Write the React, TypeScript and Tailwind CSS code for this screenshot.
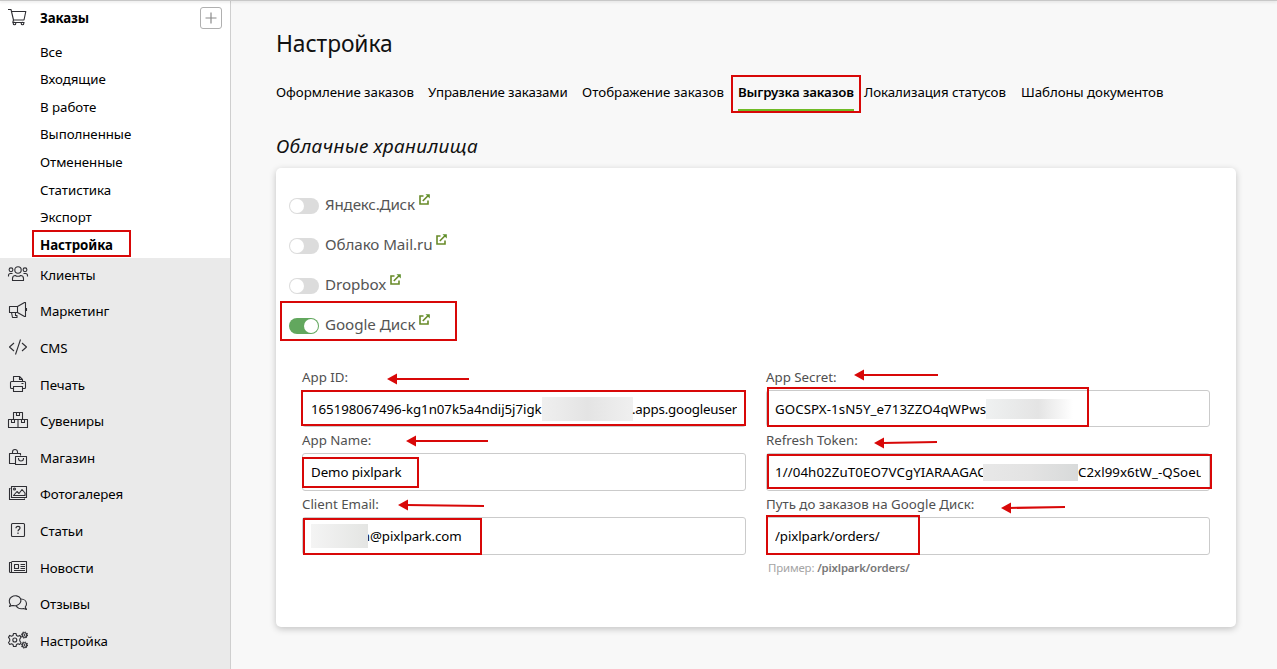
import type { ReactNode } from "react";

function Icon({ children }: { children: ReactNode }) {
  return (
    <svg
      viewBox="0 0 22 22"
      className="h-[22px] w-[22px] shrink-0"
      fill="none"
      stroke="#2e2e33"
      strokeWidth="1.1"
      strokeLinejoin="round"
    >
      {children}
    </svg>
  );
}

const cartIcon = (
  <Icon>
    <path d="M1 2.500h3l2.500 10.500h10.500L18.800 4.500H4.500M6.500 13l-.7 2.500H17.500" />
    <circle cx="7.500" cy="16.500" r="1.300" />
    <circle cx="15.500" cy="16.500" r="1.300" />
  </Icon>
);

const menu: { label: string; icon: ReactNode }[] = [
  {
    label: "Клиенты",
    icon: (
      <Icon>
        <circle cx="11" cy="6" r="3.200" />
        <path d="M5.500 16.500v-2c0-2 1.200-3 3-3l1 .7h3l1-.7c1.800 0 3 1 3 3v2z" />
        <circle cx="4" cy="5.800" r="1.900" />
        <circle cx="18" cy="5.800" r="1.900" />
        <path d="M1.500 12.500v-1c0-1.200.7-2 2-2h2M20.500 12.500v-1c0-1.200-.7-2-2-2h-2" />
      </Icon>
    ),
  },
  {
    label: "Маркетинг",
    icon: (
      <Icon>
        <path d="M2.500 6.500h8l7-4h1v14h-1l-7-4h-8zM10.500 6.500v6M4.500 12.500l1 5h4.500v-2H8.500v-3M19.500 8v3" />
      </Icon>
    ),
  },
  {
    label: "CMS",
    icon: (
      <Icon>
        <path d="M7 6L2.500 10L7 14M15 6l4.500 4L15 14M13.500 2.500L8.500 17.500" />
      </Icon>
    ),
  },
  {
    label: "Печать",
    icon: (
      <Icon>
        <path d="M6.500 7.500v-5h6l3 3v2M12.500 2.500v3h3M6.500 14.500h-2a1 1 0 0 1-1-1v-5a1 1 0 0 1 1-1h13a1 1 0 0 1 1 1v5a1 1 0 0 1-1 1h-2M6.500 12.500h9v5h-9zM14.500 9.500h2" />
      </Icon>
    ),
  },
  {
    label: "Сувениры",
    icon: (
      <Icon>
        <path d="M6.500 2.500h9v7h-9zM1.500 9.500H11v8H1.500zM11 9.500h9.500v8H11zM9.500 2.500v3h3v-3M4.500 9.500v3h3v-3M14.500 9.500v3h3v-3" />
      </Icon>
    ),
  },
  {
    label: "Магазин",
    icon: (
      <Icon>
        <path d="M8 16.500H2.500v-10h11v2M5.500 6.500V5a2.500 2.500 0 0 1 5 0v1.500M8.500 9.500h11v8h-11zM11.500 11v.5a2.500 2.500 0 0 0 5 0V11" />
      </Icon>
    ),
  },
  {
    label: "Фотогалерея",
    icon: (
      <Icon>
        <path d="M4.500 3.500h15v11h-15zM3.500 5.500h-1v11h15v-1M6.500 12.500l3.500-4 2 2 3-4 3 3.500v2.500z" />
        <circle cx="7.500" cy="6" r="1" />
      </Icon>
    ),
  },
  {
    label: "Статьи",
    icon: (
      <Icon>
        <rect x="4.500" y="3.500" width="13" height="13" rx="1" />
        <path d="M9 8.300c0-1.200.8-1.900 2-1.900s2 .7 2 1.700c0 1.400-2 1.500-2 3.200M11 12.500v1.400" strokeWidth="1.200" />
      </Icon>
    ),
  },
  {
    label: "Новости",
    icon: (
      <Icon>
        <path d="M4.500 4.500h15v11h-16a1 1 0 0 1-1-1v-9h2v9.500M7.500 7.500h4v4h-4zM13.500 7.500h4.500M13.500 9.500h4.500M13.500 11.500h4.500M7 13.500h11" />
      </Icon>
    ),
  },
  {
    label: "Отзывы",
    icon: (
      <Icon>
        <path d="M3.500 11.500C1.500 9 2 5.500 4.500 4c3-2 7.500-1.500 9 1.500 1.200 3-.5 6-4 7-2 .5-3 0-4.500 0l-2.500 1z" />
        <path d="M14 6c3 0 5.500 2 5.500 5 0 1.200-.4 2-1.300 3l1.300 2.500-3-1c-3 .7-5.500.3-7.500-2.700" />
      </Icon>
    ),
  },
  {
    label: "Настройка",
    icon: (
      <Icon>
        <path d="M6.500 3.500h2.500l.5 2 1.500.7 1.800-.8 1.200 2-1.200 1.600v2l1.200 1.500-1.200 2-1.800-.7-1.500.7-.5 2H6.500l-.5-2-1.500-.7-1.800.7-1.200-2 1.200-1.500V9L1.500 7.400l1.200-2 1.800.8L6 5.500z" />
        <circle cx="7.800" cy="10" r="2" />
        <circle cx="17.500" cy="5" r="2.300" />
        <circle cx="17.500" cy="15" r="2.300" />
        <circle cx="17.500" cy="5" r="3" strokeDasharray="1.200 1.150" />
        <circle cx="17.500" cy="15" r="3" strokeDasharray="1.200 1.150" />
        <circle cx="17.500" cy="5" r=".4" />
        <circle cx="17.500" cy="15" r=".4" />
      </Icon>
    ),
  },
];

const submenu = ["Все", "Входящие", "В работе", "Выполненные", "Отмененные", "Статистика", "Экспорт"];

function Sidebar() {
  return (
    <aside className="flex w-[231px] shrink-0 flex-col border-r border-[#cfcfcf] bg-[#eaeaea]">
      <div className="h-[258px] shrink-0 bg-white">
        <div className="flex h-[36px] items-center pl-[7px] pr-[8px]">
          <div className="-mt-px h-[22px]">{cartIcon}</div>
          <span className="ml-[11px] flex-1 font-bold tracking-[-0.150px]">Заказы</span>
          <button className="flex h-[22px] w-[22px] items-center justify-center rounded-[3px] border border-[#b0b0b0]">
            <svg viewBox="0 0 12 12" className="h-3 w-3" stroke="#8a8a8a" strokeWidth="1.200">
              <path d="M6 0.500v11M0.500 6h11" />
            </svg>
          </button>
        </div>
        <nav className="flex flex-col pl-[40px] pt-[2.700px]">
          {submenu.map((s) => (
            <a key={s} className="h-[27.600px] leading-[27.600px] tracking-[-0.050px]">
              {s}
            </a>
          ))}
          <a className="h-[27.600px] font-bold leading-[27.600px] tracking-[-0.050px]">Настройка</a>
        </nav>
      </div>
      <nav className="mt-[-1.500px] flex flex-col">
        {menu.map((m) => (
          <a key={m.label} className="flex h-[36.600px] shrink-0 items-center pl-[7px]">
            {m.icon}
            <span className="ml-[11px] tracking-[-0.080px]">{m.label}</span>
          </a>
        ))}
      </nav>
    </aside>
  );
}

function Tabs() {
  return (
    <nav className="mt-[22px] flex h-[30px] whitespace-nowrap leading-[30px]">
      <a className="w-[152px] tracking-[-0.030px]">Оформление заказов</a>
      <a className="w-[154px] tracking-[-0.120px]">Управление заказами</a>
      <a className="w-[156px] tracking-[0.020px]">Отображение заказов</a>
      <a className="h-[34px] w-[116px] border-b-2 border-[#6fbb26] font-semibold tracking-[-0.180px]">
        Выгрузка заказов
      </a>
      <a className="ml-[10px] w-[157px] tracking-[-0.070px]">Локализация статусов</a>
      <a className="tracking-[-0.060px]">Шаблоны документов</a>
    </nav>
  );
}

function Switch({ label, on, tight }: { label: string; on?: boolean; tight?: boolean }) {
  return (
    <div className="flex h-[40px] items-center text-[15.200px] text-[#555]">
      <span
        className={
          on
            ? "mt-[3px] flex h-[16px] w-[30px] justify-end rounded-full bg-[#62a75e] p-px"
            : "mt-[3px] flex h-[16px] w-[30px] rounded-full bg-[#dcdcdc] p-px"
        }
      >
        <span className="h-[14px] w-[14px] rounded-full bg-white" />
      </span>
      <span className={tight ? "ml-[6px] tracking-[-0.200px]" : "ml-[6px] tracking-[-0.080px]"}>{label}</span>
      <svg
        viewBox="0 0 11 11"
        className="-mt-[10px] ml-[4px] h-[11px] w-[11px]"
        fill="none"
        stroke="#688a28"
        strokeWidth="1.600"
      >
        <path d="M4.500 2H1v8h8V6.500M3.800 7L9 1.800" />
        <path d="M6.500 .2H10.800V4.500z" fill="#5d8f2a" stroke="none" />
      </svg>
    </div>
  );
}

function Field({ label, tall, children }: { label: string; tall?: boolean; children: ReactNode }) {
  return (
    <label className="block">
      <span className="block h-[22px] whitespace-nowrap leading-[22px] tracking-[-0.010px] text-[#505050]">{label}</span>
      <span
        className={
          tall
            ? "mt-[2px] flex h-[38px] items-center rounded-[3px] border border-[#cbcbcb] px-[8px]"
            : "mt-[2px] flex h-[37px] items-center rounded-[3px] border border-[#cbcbcb] px-[8px]"
        }
      >
        <span className="flex w-full items-center overflow-hidden whitespace-nowrap">{children}</span>
      </span>
    </label>
  );
}

function Frame({ className }: { className: string }) {
  return <div className={"pointer-events-none absolute border-2 border-[#d80808] " + className} />;
}

const arrows = [
  [387, 379, 469, 379],
  [406, 441, 488, 441],
  [398, 505, 484, 506],
  [854, 375, 938, 375],
  [874, 443, 937, 442],
  [1001, 508, 1065, 507],
];

function Annotations() {
  return (
    <>
      <Frame className="left-[32px] top-[230px] h-[27px] w-[99px]" />
      <Frame className="left-[731px] top-[75px] h-[38px] w-[130px]" />
      <Frame className="left-[280px] top-[301px] h-[40px] w-[177px]" />
      <Frame className="left-[301px] top-[390px] h-[36px] w-[445px]" />
      <Frame className="left-[302px] top-[457px] h-[31px] w-[117px]" />
      <Frame className="left-[303px] top-[518px] h-[37px] w-[179px]" />
      <Frame className="left-[767px] top-[387px] h-[40px] w-[322px]" />
      <Frame className="left-[767px] top-[454px] h-[35px] w-[445px]" />
      <Frame className="left-[766px] top-[515px] h-[40px] w-[154px]" />
      <svg viewBox="0 0 1277 669" className="pointer-events-none absolute left-0 top-0 h-[669px] w-[1277px]">
        {arrows.map(([x1, y1, x2, y2]) => (
          <g key={`${x1}-${y1}`} fill="#d80808" stroke="none">
            <path d={`M${x1} ${y1}l10-5.500v11z`} />
            <path d={`M${x1 + 8} ${y1}L${x2} ${y2}`} stroke="#d80808" strokeWidth="2" />
          </g>
        ))}
      </svg>
    </>
  );
}

export default function App() {
  return (
    <div className="relative flex h-[669px] w-[1277px] overflow-hidden bg-[#f8f8f8] font-['Noto_Sans','Open_Sans',sans-serif] text-[13.300px] leading-[18px] text-black">
      <Sidebar />
      <main className="flex-1 pl-[45px] pt-[28px]">
        <h1 className="h-[32px] text-[22.800px] leading-[32px] tracking-[-0.080px] text-[#111]">Настройка</h1>
        <div className="-mt-[5px]">
          <Tabs />
        </div>
        <h2 className="mt-[25px] h-[28px] text-[19px] italic leading-[28px] tracking-[0.330px] text-[#111]">
          Облачные хранилища
        </h2>
        <section className="mt-[8px] h-[459px] w-[960px] rounded-[5px] bg-white pl-[13px] pt-[16px] shadow-[0_2px_7px_rgba(0,0,0,0.22)]">
          <Switch label="Яндекс.Диск" tight />
          <Switch label="Облако Mail.ru" />
          <Switch label="Dropbox" />
          <Switch label="Google Диск" on />
          <div className="ml-[13px] mt-[22px] grid grid-cols-[444px_444px] gap-x-[20px] gap-y-[2px]">
            <Field label="App ID:">
              <span className="w-[231px] shrink-0 tracking-[-0.050px]">165198067496-kg1n07k5a4ndij5j7igk</span>
              <span className="h-[24px] w-[91px] shrink-0 bg-linear-to-r from-[#efefef] via-[#e4e4e4] to-[#f0f0f0]" />
              <span className="-ml-px tracking-[-0.200px]">.apps.googleuser</span>
            </Field>
            <Field label="App Secret:">
              <span className="w-[211px] shrink-0 tracking-[0.060px]">GOCSPX-1sN5Y_e713ZZO4qWPws</span>
              <span className="-mt-[3px] h-[23px] w-[87px] shrink-0 bg-linear-to-r from-[#eff1f1] via-[#e4e4e4] via-60% to-white" />
            </Field>
            <Field label="App Name:" tall>
              <span className="tracking-[-0.080px]">Demo pixlpark</span>
            </Field>
            <Field label="Refresh Token:" tall>
              <span className="w-[208px] shrink-0 overflow-hidden tracking-[0.080px]">1//04h02ZuT0EO7VCgYIARAAGAC</span>
              <span className="h-[17px] w-[95px] shrink-0 bg-linear-to-r from-[#e8e8e8] via-[#e3e3e3] to-[#d8dada]" />
              <span className="w-[124px] shrink-0 overflow-hidden tracking-[0.050px]">C2xl99x6tW_-QSoeu</span>
            </Field>
            <Field label="Client Email:" tall>
              <span className="-ml-[4px] h-[24px] w-[61px] shrink-0 bg-linear-to-r from-[#f5f5f5] to-[#e4e5e3]" />
              <span className="flex w-[2px] shrink-0 justify-end overflow-hidden">n</span>
              <span className="tracking-[-0.080px]">@pixlpark.com</span>
            </Field>
            <Field label="Путь до заказов на Google Диск:" tall>
              <span className="tracking-[-0.080px]">/pixlpark/orders/</span>
            </Field>
          </div>
          <p className="ml-[479px] mt-[4px] text-[11.400px] tracking-[-0.150px] text-[#a5a5a5]">
            Пример: <span className="font-semibold text-[#777]">/pixlpark/orders/</span>
          </p>
        </section>
      </main>
      <div className="absolute inset-x-0 top-0 h-px bg-[#c8c8c8] shadow-[0_1px_3px_rgba(0,0,0,0.18)]" />
      <Annotations />
    </div>
  );
}
